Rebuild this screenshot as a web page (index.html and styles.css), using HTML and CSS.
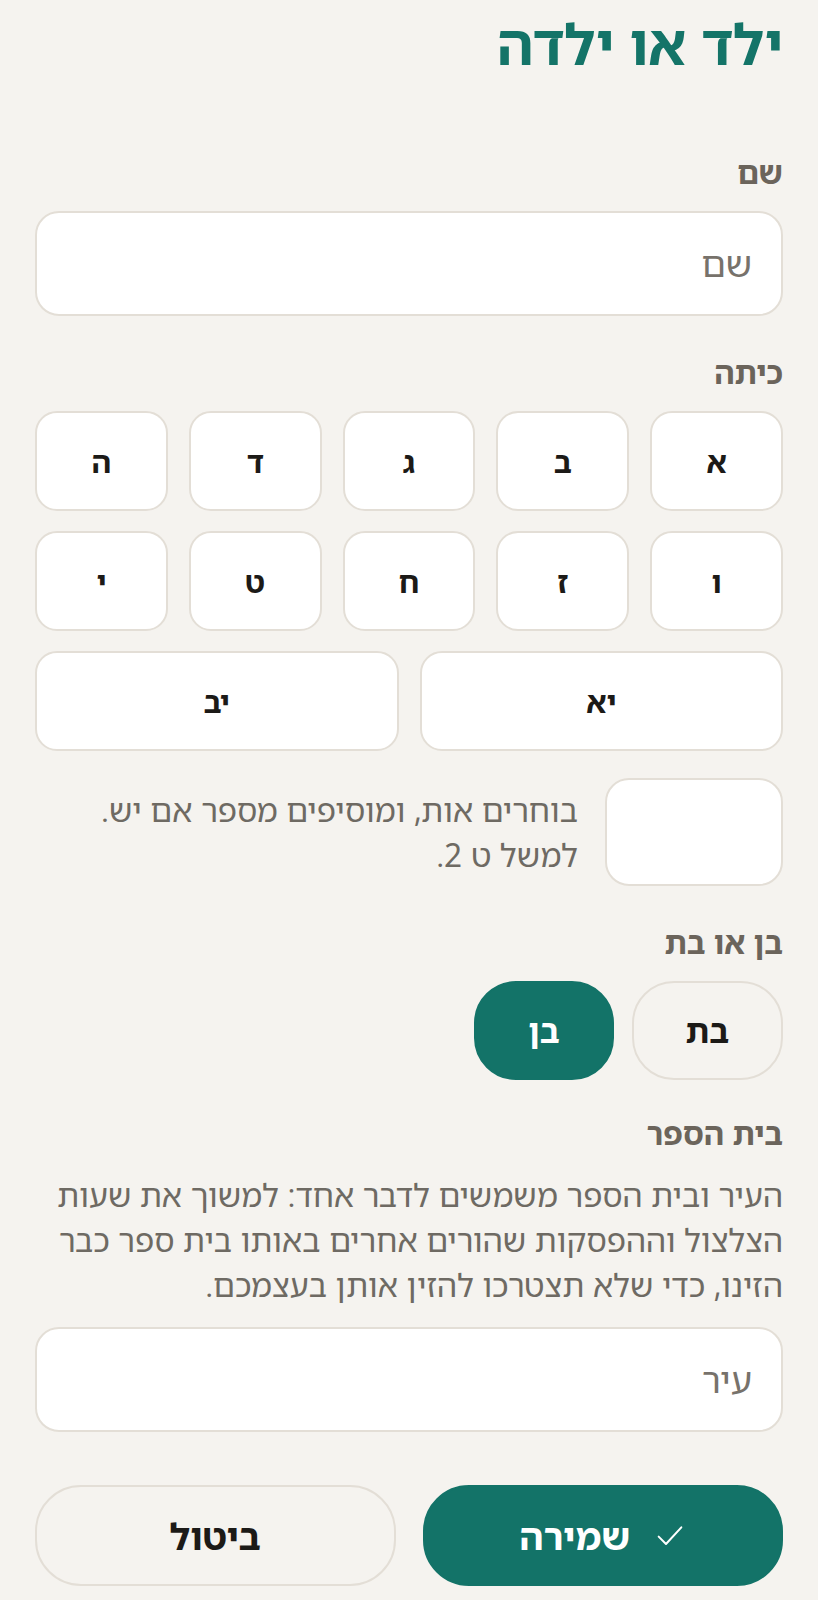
FILE: index.html
```html
<!DOCTYPE html>
<html lang="he" dir="rtl">
<head>
<meta charset="utf-8">
<title>ילד או ילדה</title>
<link rel="stylesheet" href="styles.css">
</head>
<body>
<main class="form">
  <h1 class="title">ילד או ילדה</h1>

  <section class="field field-first">
    <div class="label">שם</div>
    <div class="input"><span class="placeholder">שם</span></div>
  </section>

  <section class="field">
    <div class="label">כיתה</div>
    <div class="grade-grid">
      <button class="grade">א</button>
      <button class="grade">ב</button>
      <button class="grade">ג</button>
      <button class="grade">ד</button>
      <button class="grade">ה</button>
      <button class="grade">ו</button>
      <button class="grade">ז</button>
      <button class="grade">ח</button>
      <button class="grade">ט</button>
      <button class="grade">י</button>
      <button class="grade grade-wide">יא</button>
      <button class="grade grade-wide">יב</button>
    </div>
    <div class="suffix-row">
      <div class="input input-small"></div>
      <p class="hint">בוחרים אות, ומוסיפים מספר אם יש. למשל ט 2.</p>
    </div>
  </section>

  <section class="field">
    <div class="label">בן או בת</div>
    <div class="toggles">
      <button class="toggle">בת</button>
      <button class="toggle toggle-selected">בן</button>
    </div>
  </section>

  <section class="field field-school">
    <div class="label">בית הספר</div>
    <p class="desc">העיר ובית הספר משמשים לדבר אחד: למשוך את שעות הצלצול וההפסקות שהורים אחרים באותו בית ספר כבר הזינו, כדי שלא תצטרכו להזין אותן בעצמכם.</p>
    <div class="input input-city"><span class="placeholder">עיר</span></div>
  </section>

  <div class="actions">
    <button class="btn btn-primary">
      <svg class="check" viewBox="0 0 24 24" width="32" height="32" aria-hidden="true"><path d="M3.5 12.5 L9 18 L20.5 5.5" fill="none" stroke="#ffffff" stroke-width="1.5" stroke-linecap="round" stroke-linejoin="round"/></svg>
      <span>שמירה</span>
    </button>
    <button class="btn btn-secondary">ביטול</button>
  </div>
</main>
</body>
</html>
```

FILE: styles.css
```css
* { box-sizing: border-box; }

html { background: #f5f3ef; }

body {
  margin: 0;
  padding: 9px 35px 0;
  font-family: "Noto Sans Hebrew", "Noto Sans", "DejaVu Sans", sans-serif;
  color: #1c1a17;
  background: #f5f3ef;
}

button {
  font-family: inherit;
  cursor: pointer;
}

.title {
  margin: 0;
  font-size: 56px;
  line-height: 68px;
  font-weight: 700;
  color: #147468;
}

.field { margin-top: 38px; }
.field-first { margin-top: 77px; }
.field-school { margin-top: 35px; }

.label {
  font-size: 31px;
  line-height: 36px;
  font-weight: 700;
  color: #6b645b;
  margin: 0 0 21px;
}

.input {
  height: 105px;
  background: #ffffff;
  border: 2px solid #e3ded6;
  border-radius: 24px;
  display: flex;
  align-items: center;
  padding: 0 29px;
  font-size: 36px;
  color: #77726b;
}

.grade-grid {
  display: grid;
  grid-template-columns: repeat(10, 1fr);
  gap: 20px 21px;
}

.grade {
  grid-column: span 2;
  height: 100px;
  background: #ffffff;
  border: 2px solid #e3ded6;
  border-radius: 22px;
  font-size: 30px;
  font-weight: 700;
  color: #1c1a17;
  padding: 0;
}

.grade-wide { grid-column: span 5; }

.suffix-row {
  display: flex;
  align-items: center;
  gap: 27px;
  margin-top: 27px;
}

.input-small {
  flex: 0 0 178px;
  height: 108px;
}

.hint {
  margin: 0;
  max-width: 500px;
  font-size: 32px;
  line-height: 45px;
  color: #6e6a63;
}

.toggles {
  display: flex;
  gap: 18px;
}

.toggle {
  height: 99px;
  padding: 0 52px;
  border: 2px solid #e3ded6;
  border-radius: 42px;
  background: transparent;
  font-size: 33px;
  font-weight: 700;
  color: #1c1a17;
}

.toggle-selected {
  background: #137368;
  border-color: #137368;
  color: #ffffff;
}

.desc {
  margin: 0 0 20px;
  font-size: 32px;
  line-height: 45px;
  color: #6e6a63;
}

.actions {
  display: flex;
  gap: 27px;
  margin-top: 53px;
}

.btn {
  flex: 1 1 0;
  height: 101px;
  border-radius: 46px;
  font-size: 37px;
  font-weight: 700;
  display: flex;
  align-items: center;
  justify-content: center;
  gap: 24px;
  padding: 0;
}

.btn-primary {
  background: #137368;
  border: 2px solid #137368;
  color: #ffffff;
}

.btn-secondary {
  background: transparent;
  border: 2px solid #e3ded6;
  color: #1c1a17;
}

.check { display: block; }
```
